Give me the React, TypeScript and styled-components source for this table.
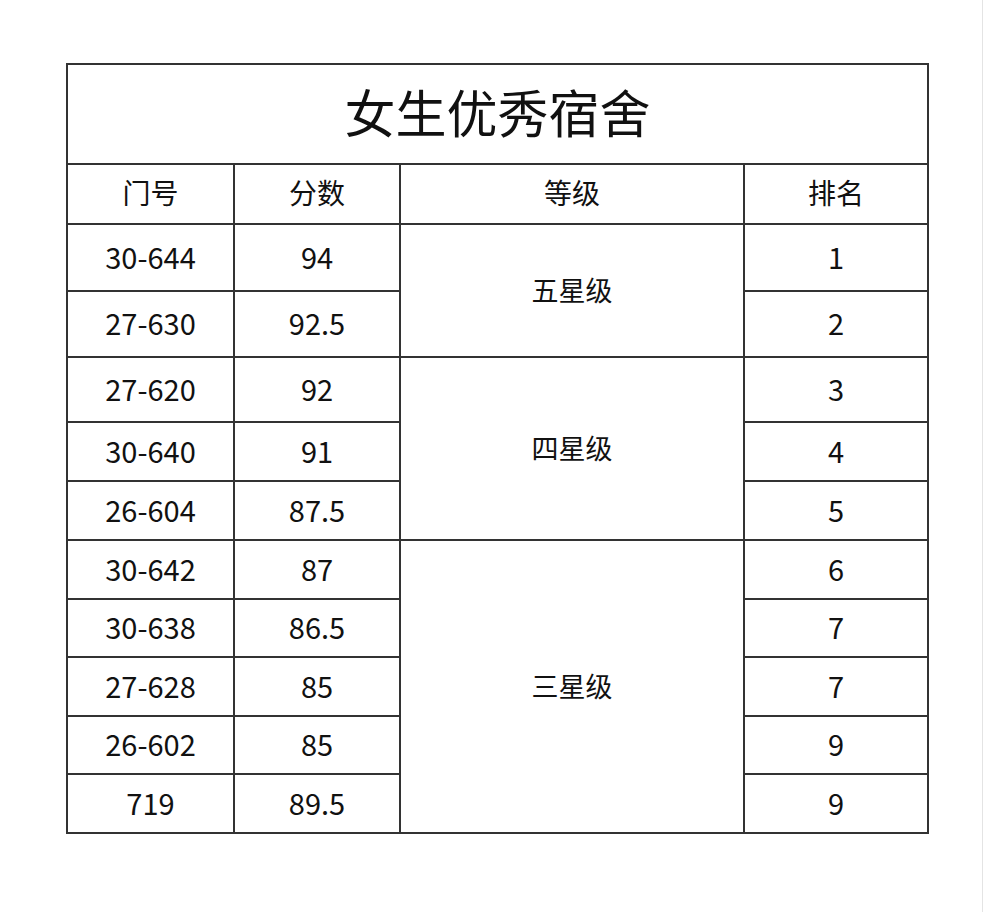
import * as React from 'react';
import styled, { createGlobalStyle } from 'styled-components';

const GlobalStyle = createGlobalStyle`
  html, body {
    margin: 0;
    padding: 0;
    background: #ffffff;
  }
  body {
    font-family: "Noto Sans CJK SC", "Noto Sans", sans-serif;
    color: #111111;
  }
`;

type Row = { door: string; score: string; rank: string; height: number };
type Group = { level: string; rows: Row[] };

const groups: Group[] = [
  {
    level: '五星级',
    rows: [
      { door: '30-644', score: '94', rank: '1', height: 67 },
      { door: '27-630', score: '92.5', rank: '2', height: 66 },
    ],
  },
  {
    level: '四星级',
    rows: [
      { door: '27-620', score: '92', rank: '3', height: 65 },
      { door: '30-640', score: '91', rank: '4', height: 59 },
      { door: '26-604', score: '87.5', rank: '5', height: 59 },
    ],
  },
  {
    level: '三星级',
    rows: [
      { door: '30-642', score: '87', rank: '6', height: 59 },
      { door: '30-638', score: '86.5', rank: '7', height: 58 },
      { door: '27-628', score: '85', rank: '7', height: 59 },
      { door: '26-602', score: '85', rank: '9', height: 58 },
      { door: '719', score: '89.5', rank: '9', height: 59 },
    ],
  },
];

const App = () => {
  return (
    <>
      <GlobalStyle />
      <Styled.Page>
        <Styled.Table>
          <colgroup>
            <col style={{ width: 167 }} />
            <col style={{ width: 166 }} />
            <col style={{ width: 344 }} />
            <col style={{ width: 184 }} />
          </colgroup>
          <thead>
            <Styled.Row h={100}>
              <Styled.Title colSpan={4}>女生优秀宿舍</Styled.Title>
            </Styled.Row>
            <Styled.Row h={60}>
              <Styled.Head>门号</Styled.Head>
              <Styled.Head>分数</Styled.Head>
              <Styled.Head>等级</Styled.Head>
              <Styled.Head>排名</Styled.Head>
            </Styled.Row>
          </thead>
          <tbody>
            {groups.map((g) =>
              g.rows.map((r, i) => (
                <Styled.Row h={r.height} key={g.level + i}>
                  <Styled.Cell>{r.door}</Styled.Cell>
                  <Styled.Cell>{r.score}</Styled.Cell>
                  {i === 0 && (
                    <Styled.Level rowSpan={g.rows.length}>{g.level}</Styled.Level>
                  )}
                  <Styled.Cell>{r.rank}</Styled.Cell>
                </Styled.Row>
              )),
            )}
          </tbody>
        </Styled.Table>
      </Styled.Page>
    </>
  );
};

const Styled = {
  Page: styled.div`
    box-sizing: border-box;
    width: 983px;
    min-height: 912px;
    padding: 63px 0 0 66px;
    border-right: 1px solid #e4e4e4;
  `,
  Table: styled.table`
    border-collapse: collapse;
    table-layout: fixed;
    width: 862px;
    border: 2px solid #333333;
  `,
  Row: styled.tr<{ h: number }>`
    height: ${(props) => props.h}px;
  `,
  Title: styled.th`
    border: 2px solid #333333;
    padding: 0 0 7px;
    font-size: 51px;
    font-weight: 400;
    text-align: center;
    vertical-align: middle;
    color: #111111;
  `,
  Head: styled.th`
    border: 2px solid #333333;
    padding: 0 0 4px;
    font-size: 28px;
    font-weight: 400;
    text-align: center;
    vertical-align: middle;
    color: #111111;
  `,
  Cell: styled.td`
    border: 2px solid #333333;
    padding: 0 0 4px;
    font-size: 29px;
    text-align: center;
    vertical-align: middle;
    color: #111111;
  `,
  Level: styled.td`
    border: 2px solid #333333;
    padding: 0 0 2px;
    font-size: 27px;
    text-align: center;
    vertical-align: middle;
    color: #111111;
  `,
};

export default App;
